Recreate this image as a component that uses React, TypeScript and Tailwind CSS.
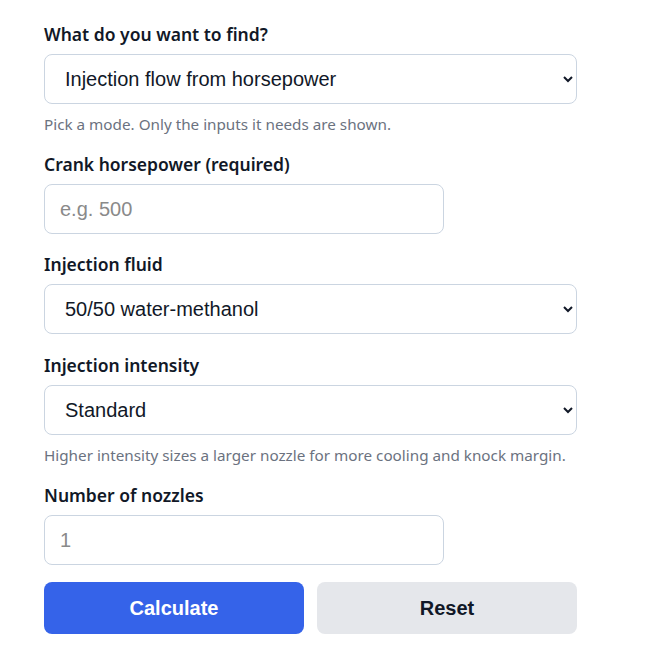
import { useState } from 'react'

const labelCls = "block text-[17.5px] leading-6 font-semibold text-[#111827] mb-2"
const selectCls =
  "block h-[50px] w-[533px] rounded-lg border border-[#cbd5e1] bg-white pl-4 pr-[11px] text-[20px] text-[#111827] font-['Liberation_Sans',Arial,sans-serif]"
const inputCls =
  "block h-[50px] w-[400px] rounded-lg border border-[#cbd5e1] bg-white px-[15px] text-[20px] text-[#111827] placeholder:text-[#8a8a8a] font-['Liberation_Sans',Arial,sans-serif]"
const helpCls = "mt-[10px] text-[15.25px] leading-5 text-[#6b7280]"

export default function App() {
  const [mode, setMode] = useState('flow')
  const [hp, setHp] = useState('')
  const [fluid, setFluid] = useState('5050')
  const [intensity, setIntensity] = useState('standard')
  const [nozzles, setNozzles] = useState('')

  return (
    <div className="min-h-screen bg-white font-['Noto_Sans',sans-serif]">
      <div className="pl-11 pt-[22px] w-[577px]">
        <div className="mb-[18px]">
          <label className={labelCls}>What do you want to find?</label>
          <select value={mode} onChange={(e) => setMode(e.target.value)} className={selectCls}>
            <option value="flow">Injection flow from horsepower</option>
            <option value="hp">Horsepower from injection flow</option>
          </select>
          <p className={helpCls}>Pick a mode. Only the inputs it needs are shown.</p>
        </div>

        <div className="mb-[18px]">
          <label className={labelCls}>Crank horsepower (required)</label>
          <input
            type="text"
            value={hp}
            onChange={(e) => setHp(e.target.value)}
            placeholder="e.g. 500"
            className={inputCls}
          />
        </div>

        <div className="mb-[19px]">
          <label className={labelCls}>Injection fluid</label>
          <select value={fluid} onChange={(e) => setFluid(e.target.value)} className={selectCls}>
            <option value="5050">50/50 water-methanol</option>
            <option value="water">Water</option>
            <option value="meth">Methanol</option>
          </select>
        </div>

        <div className="mb-[18px]">
          <label className={labelCls}>Injection intensity</label>
          <select
            value={intensity}
            onChange={(e) => setIntensity(e.target.value)}
            className={selectCls}
          >
            <option value="standard">Standard</option>
            <option value="high">High</option>
          </select>
          <p className={helpCls}>
            Higher intensity sizes a larger nozzle for more cooling and knock margin.
          </p>
        </div>

        <div className="mb-[17px]">
          <label className={labelCls}>Number of nozzles</label>
          <input
            type="text"
            value={nozzles}
            onChange={(e) => setNozzles(e.target.value)}
            placeholder="1"
            className={inputCls}
          />
        </div>

        <div className="flex gap-[13px] w-[533px]">
          <button className="h-[52px] flex-1 rounded-lg bg-[#3563e9] text-white text-[20px] font-bold font-['Liberation_Sans',Arial,sans-serif]">
            Calculate
          </button>
          <button className="h-[52px] flex-1 rounded-lg bg-[#e5e7eb] text-[#111827] text-[20px] font-bold font-['Liberation_Sans',Arial,sans-serif]">
            Reset
          </button>
        </div>
      </div>
    </div>
  )
}
